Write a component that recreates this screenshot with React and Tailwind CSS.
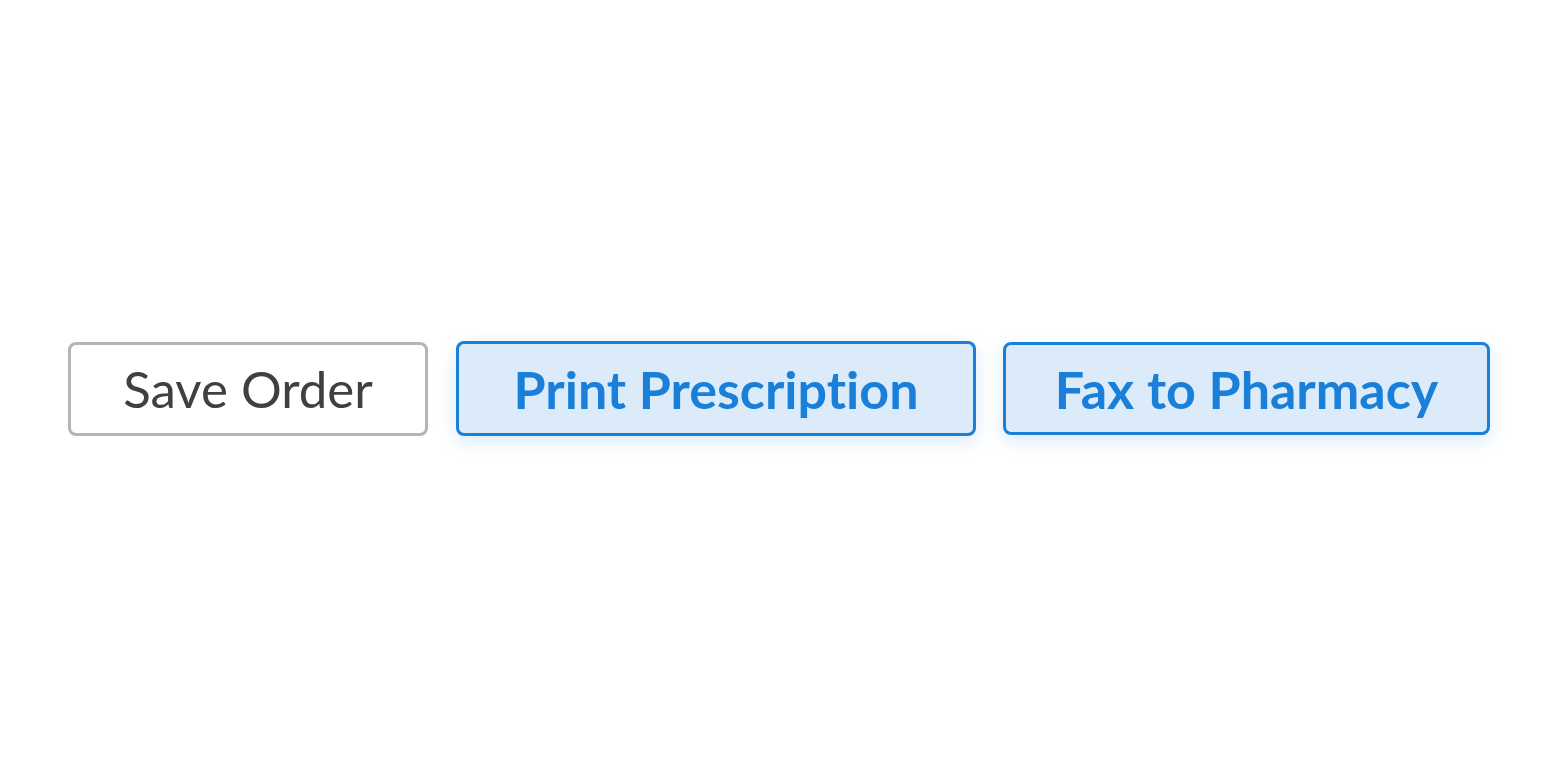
export default function App() {
  return (
    <div className="min-h-screen w-full bg-white flex items-center pl-[68px] pt-[1px]" style={{ fontFamily: "Lato, 'Noto Sans', sans-serif" }}>
      <div className="flex items-center">
        <button className="w-[360px] h-[94px] rounded-[8px] border-[3px] border-[#b5b5b5] bg-white text-[#404040] text-[51px] leading-none font-normal flex items-center justify-center [font-variant-ligatures:none]">
          Save Order
        </button>
        <button className="ml-[28px] w-[520px] h-[95px] rounded-[8px] border-[3px] border-[#1a7fd9] bg-[#dcebfa] text-[#1a7fd9] text-[52px] leading-none font-bold flex items-center justify-center shadow-[0_6px_18px_rgba(26,127,217,0.16)] [font-variant-ligatures:none]">
          Print Prescription
        </button>
        <button className="ml-[27px] w-[487px] h-[93px] rounded-[8px] border-[3px] border-[#1a7fd9] bg-[#dcebfa] text-[#1a7fd9] text-[52px] leading-none font-bold flex items-center justify-center shadow-[0_6px_18px_rgba(26,127,217,0.16)] [font-variant-ligatures:none]">
          Fax to Pharmacy
        </button>
      </div>
    </div>
  );
}
